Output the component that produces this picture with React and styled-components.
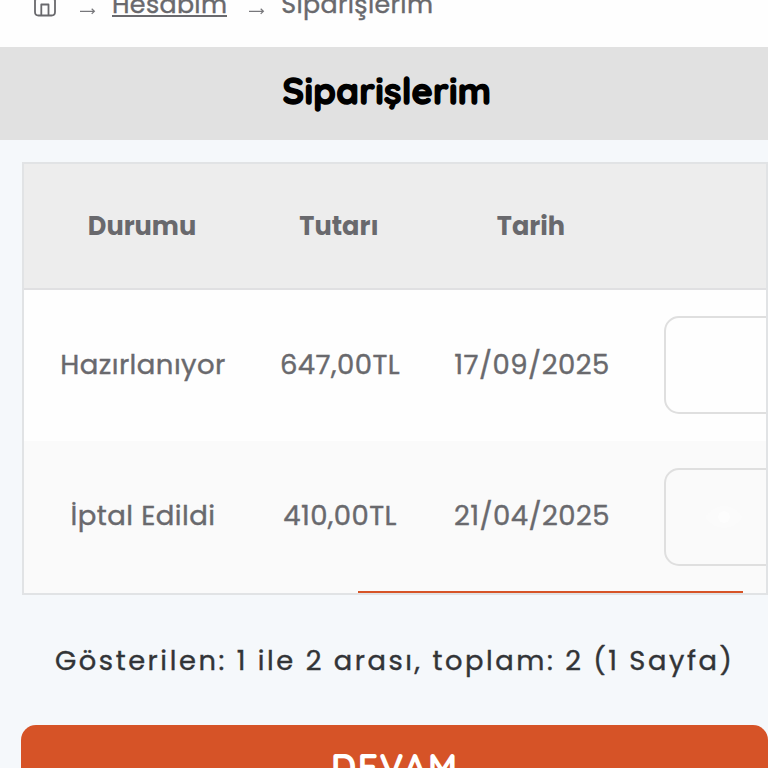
import React from 'react';
import styled, { createGlobalStyle } from 'styled-components';

const GlobalStyle = createGlobalStyle`
* {
  box-sizing: border-box;
}
body {
  margin: 0;
  overflow: hidden;
  background: #f5f8fb;
  color: #69696d;
  font-family: Poppins, Inter, "Liberation Sans", sans-serif;
  font-feature-settings: "cv11";
}
`;

const Page = styled.div`
width: 768px;
height: 768px;
overflow: hidden;
display: flex;
flex-direction: column;
`;

const Breadcrumb = styled.nav`
height: 47px;
flex: none;
display: flex;
align-items: flex-start;
background: #fefefe;
font-size: 25.3px;
line-height: 32px;
letter-spacing: 0.35px;
overflow: hidden;
-webkit-text-stroke: 0.4px #69696d;
`;

const HomeIcon = styled.svg`
width: 24px;
height: 26px;
flex: none;
margin: -9px 20px 0 33px;
`;

const ArrowIcon = styled.svg`
width: 20px;
height: 10px;
flex: none;
margin-top: 6px;
margin-right: 14px;
margin-left: 1px;
`;

const Crumb = styled.span`
height: 29px;
margin-top: -12px;
margin-right: 19px;
white-space: nowrap;
border-bottom: ${props => (props.$link ? '2px solid #69696d' : 'none')};
`;

const Heading = styled.header`
height: 93px;
flex: none;
display: flex;
justify-content: center;
align-items: center;
background: #e1e1e1;
`;

const Title = styled.h1`
margin: 0;
padding: 0 0 5px 6px;
color: #000;
font-family: Quicksand, Poppins, Inter, sans-serif;
font-size: 36px;
line-height: 44px;
font-weight: 700;
letter-spacing: 0.35px;
-webkit-text-stroke: 1.5px #000;
`;

const TableWrap = styled.div`
height: 433px;
flex: none;
margin: 22px 0 0 22px;
border: 2px solid #e1e3e5;
display: flex;
flex-direction: column;
overflow: hidden;
`;

const Row = styled.div`
height: ${props => props.$height};
flex: none;
display: grid;
grid-template-columns: 236px 158px 226px 180px;
align-items: center;
background: ${props => props.$bg};
border-bottom: ${props => (props.$head ? '2px solid #e0e0e2' : 'none')};
`;

const HeadCell = styled.div`
padding-bottom: 1px;
text-align: center;
font-size: 25.6px;
line-height: 32px;
font-weight: 700;
`;

const Cell = styled.div`
padding: 0 0 2px 2px;
text-align: center;
white-space: nowrap;
font-size: 27.5px;
line-height: 32px;
letter-spacing: 0.45px;
-webkit-text-stroke: 0.4px #69696d;
`;

const ViewButton = styled.button`
width: 150px;
height: 98px;
margin: 0 0 1px 20px;
border: 2px solid #dfdfdf;
border-radius: 15px;
background: transparent;
display: flex;
align-items: center;
padding: 0 0 0 38px;
`;

const ScrollBar = styled.div`
width: 385px;
height: 2px;
flex: none;
margin-top: -2px;
margin-left: 334px;
background: #d75427;
`;

const Summary = styled.p`
height: 32px;
flex: none;
margin: 50px 0 0 55px;
color: #323437;
font-size: 27.3px;
line-height: 32px;
letter-spacing: 2.56px;
white-space: nowrap;
-webkit-text-stroke: 0.4px #323437;
`;

const ContinueButton = styled.button`
height: 93px;
flex: none;
margin: 48px 0 0 21px;
padding: 0 0 9px;
border: 0;
border-radius: 15px;
background: #d65327;
color: #fff;
font-family: Quicksand, Poppins, Inter, sans-serif;
font-size: 36px;
line-height: 40px;
font-weight: 700;
letter-spacing: 1.1px;
`;

const orders = [
  { status: 'Hazırlanıyor', total: '647,00TL', date: '17/09/2025', bg: '#fefefe', height: '151px' },
  { status: 'İptal Edildi', total: '410,00TL', date: '21/04/2025', bg: '#fafafa', height: '152px' },
];

const Arrow = () => {
    return <ArrowIcon viewBox="0 0 20 10" fill="none" stroke="#77777b" strokeWidth="1.2">
        <path d="M2 5.3h14.500M13.700 2.700l2.700 2.600-2.700 2.600" />
    </ArrowIcon>
}

const Eye = () => {
    return <svg width="40" height="28" viewBox="0 0 40 28" fill="#fff" opacity="0.6">
        <path d="M1 14C11-1 29-1 39 14 29 29 11 29 1 14Z" opacity="0.4" />
        <circle cx="20" cy="14" r="6" />
    </svg>
}

const App = () => {
    return <Page>
        <GlobalStyle />
        <Breadcrumb>
            <HomeIcon viewBox="0 0 24 26" fill="none" stroke="#69696d" strokeWidth="1.8" strokeLinejoin="round">
                <path d="M2 9 12 1l10 8v12q0 3.500-3.500 3.500h-13Q2 24.500 2 21Z" />
                <path d="M8.300 24.500v-11h7.200v11" />
            </HomeIcon>
            <Arrow />
            <Crumb $link>Hesabım</Crumb>
            <Arrow />
            <Crumb>Siparişlerim</Crumb>
        </Breadcrumb>

        <Heading>
            <Title>Siparişlerim</Title>
        </Heading>

        <TableWrap>
            <Row $head $height="126px" $bg="#ededed">
                <HeadCell>Durumu</HeadCell>
                <HeadCell>Tutarı</HeadCell>
                <HeadCell>Tarih</HeadCell>
            </Row>
            {orders.map(order => (
                <Row key={order.date} $height={order.height} $bg={order.bg}>
                    <Cell>{order.status}</Cell>
                    <Cell>{order.total}</Cell>
                    <Cell>{order.date}</Cell>
                    <ViewButton aria-label="Görüntüle"><Eye /></ViewButton>
                </Row>
            ))}
            <ScrollBar />
        </TableWrap>

        <Summary>Gösterilen: 1 ile 2 arası, toplam: 2 (1 Sayfa)</Summary>
        <ContinueButton>DEVAM</ContinueButton>
    </Page>
}

export default App;
